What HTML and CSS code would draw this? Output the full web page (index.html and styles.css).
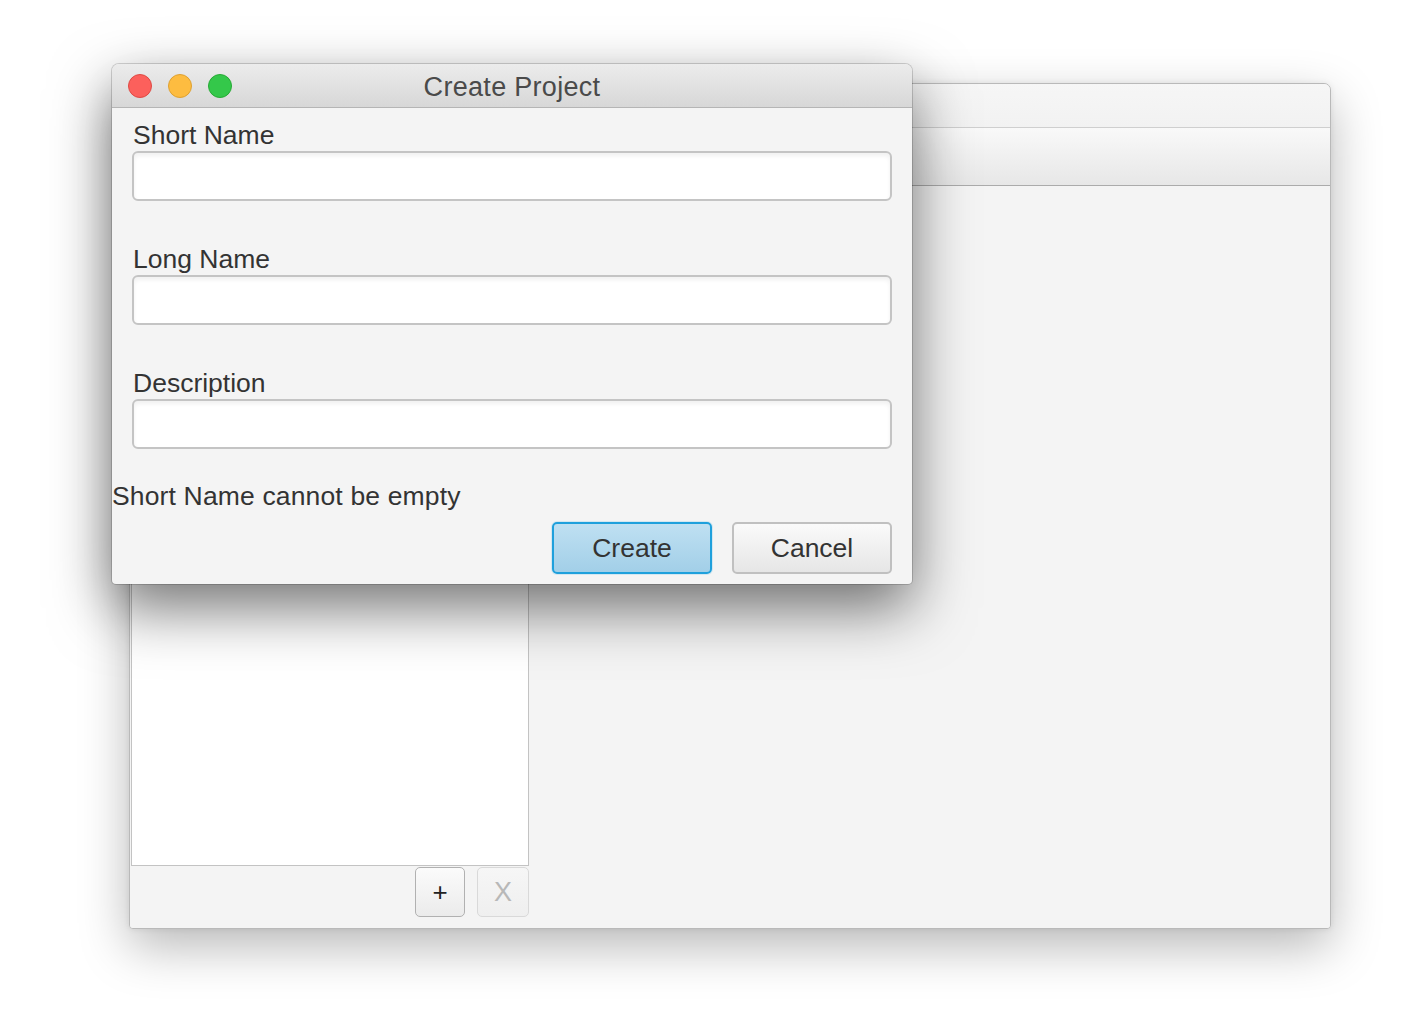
FILE: index.html
```html
<!DOCTYPE html>
<html>
<head>
<meta charset="utf-8">
<title>Create Project</title>
<link rel="stylesheet" href="styles.css">
</head>
<body>
<div class="desktop">
  <div class="main-window">
    <div class="main-titlebar"></div>
    <div class="main-toolbar"></div>
    <div class="main-content">
      <div class="left-pane">
        <div class="list"></div>
        <div class="list-actions">
          <button class="small-btn">+</button>
          <button class="small-btn disabled">X</button>
        </div>
      </div>
    </div>
  </div>

  <div class="dialog">
    <div class="dialog-titlebar">
      <div class="lights">
        <span class="light red"></span>
        <span class="light yellow"></span>
        <span class="light green"></span>
      </div>
      <div class="dialog-title">Create Project</div>
    </div>
    <div class="dialog-body">
      <div class="field-group">
        <div class="label">Short Name</div>
        <div class="input"></div>
      </div>
      <div class="field-group">
        <div class="label">Long Name</div>
        <div class="input"></div>
      </div>
      <div class="field-group">
        <div class="label">Description</div>
        <div class="input"></div>
      </div>
      <div class="error">Short Name cannot be empty</div>
      <div class="actions">
        <button class="btn primary">Create</button>
        <button class="btn">Cancel</button>
      </div>
    </div>
  </div>
</div>
</body>
</html>
```

FILE: styles.css
```css
* { box-sizing: border-box; }
html, body {
  margin: 0;
  padding: 0;
  background: #ffffff;
}
body {
  font-family: "Liberation Sans", Arial, sans-serif;
  color: #333333;
}
.desktop {
  position: relative;
  width: 1414px;
  height: 1028px;
  overflow: hidden;
  background: #ffffff;
}

/* Background window */
.main-window {
  position: absolute;
  left: 129px;
  top: 83px;
  width: 1202px;
  height: 846px;
  border: 1px solid #b9b9b9;
  border-radius: 7px 7px 4px 4px;
  background: #f4f4f4;
  display: flex;
  flex-direction: column;
  overflow: hidden;
  box-shadow: 0 18px 50px rgba(0,0,0,0.28), 0 0 6px rgba(0,0,0,0.08);
}
.main-titlebar {
  height: 44px;
  flex: none;
  background: linear-gradient(#f6f6f6, #f2f2f2);
  border-bottom: 1px solid #cfcfcf;
}
.main-toolbar {
  height: 58px;
  flex: none;
  background: linear-gradient(#f9f9f9, #e7e7e7);
  border-bottom: 1px solid #ababab;
}
.main-content {
  flex: 1;
  display: flex;
  background: #f4f4f4;
}
.left-pane {
  width: 400px;
  display: flex;
  flex-direction: column;
}
.list {
  flex: 1;
  margin-top: 12px;
  margin-left: 1px;
  margin-right: 1px;
  background: #ffffff;
  border: 1px solid #c3c3c3;
  border-top: none;
}
.list-actions {
  height: 62px;
  flex: none;
  display: flex;
  justify-content: flex-end;
  align-items: flex-start;
  gap: 12px;
  padding-top: 1px;
  padding-right: 1px;
}
.small-btn {
  height: 50px;
  width: 50px;
  border: 1px solid #b1b1b1;
  border-radius: 5px;
  background: linear-gradient(#fbfbfb, #ebebeb);
  font-family: "Liberation Sans", Arial, sans-serif;
  font-size: 26px;
  color: #222222;
  padding: 0;
}
.small-btn.disabled {
  width: 52px;
  border-color: #d9d9d9;
  background: linear-gradient(#f6f6f6, #efefef);
  color: #b8b8b8;
  font-size: 27px;
}

/* Dialog */
.dialog {
  position: absolute;
  left: 112px;
  top: 64px;
  width: 800px;
  height: 520px;
  border-radius: 7px 7px 4px 4px;
  background: #f4f4f4;
  overflow: hidden;
  display: flex;
  flex-direction: column;
  box-shadow: 0 24px 60px rgba(0,0,0,0.55), 0 0 0 1px rgba(0,0,0,0.16);
}
.dialog-titlebar {
  position: relative;
  height: 44px;
  flex: none;
  background: linear-gradient(#ececec, #d7d7d7);
  border-bottom: 1px solid #b5b5b5;
  display: flex;
  align-items: center;
  justify-content: center;
}
.lights {
  position: absolute;
  left: 16px;
  top: 10px;
  display: flex;
  gap: 16px;
}
.light {
  width: 24px;
  height: 24px;
  border-radius: 50%;
  display: block;
}
.light.red { background: #fc605c; border: 1px solid #de4a44; }
.light.yellow { background: #fdbc40; border: 1px solid #dea131; }
.light.green { background: #34c84a; border: 1px solid #27aa35; }
.dialog-title {
  font-size: 27px;
  letter-spacing: 0.3px;
  color: #4a4a4a;
  line-height: 32px;
  margin-top: 2px;
}
.dialog-body {
  flex: 1;
  padding: 11px 20px 0 20px;
  display: flex;
  flex-direction: column;
}
.field-group {
  display: flex;
  flex-direction: column;
  margin-bottom: 42px;
}
.field-group:nth-child(3) { margin-bottom: 31px; }
.label {
  font-size: 26.5px;
  line-height: 32px;
  height: 32px;
  color: #333333;
  padding-left: 1px;
}
.input {
  height: 50px;
  background: #ffffff;
  border: 2px solid #c4c4c4;
  border-radius: 6px;
  box-shadow: inset 0 3px 4px rgba(0,0,0,0.06);
}
.error {
  font-size: 26.5px;
  letter-spacing: 0.15px;
  line-height: 32px;
  height: 32px;
  margin-left: -20px;
  color: #333333;
}
.actions {
  margin-top: 10px;
  display: flex;
  justify-content: flex-end;
  gap: 20px;
}
.btn {
  width: 160px;
  height: 52px;
  border-radius: 5px;
  border: 2px solid #c0c0c0;
  background: linear-gradient(#fafafa, #e6e6e6);
  font-family: "Liberation Sans", Arial, sans-serif;
  font-size: 26.5px;
  color: #333333;
  padding: 0;
}
.btn.primary {
  border: 2px solid #1fa0dc;
  background: linear-gradient(#bfe0f2, #a2cfe8);
  box-shadow: 0 0 0 1px rgba(31,160,220,0.15);
}
```
